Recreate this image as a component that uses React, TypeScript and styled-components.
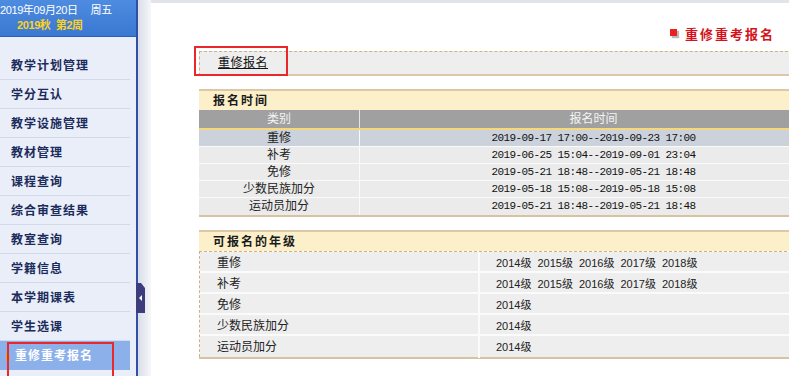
import { createGlobalStyle, styled } from "styled-components";

const GlobalStyle = createGlobalStyle`
  html, body {
    margin: 0;
    padding: 0;
    overflow: hidden;
    background: #fff;
    font-family: "Liberation Sans", "Noto Sans CJK SC", sans-serif;
  }
`;

const menu = [
  "教学计划管理",
  "学分互认",
  "教学设施管理",
  "教材管理",
  "课程查询",
  "综合审查结果",
  "教室查询",
  "学籍信息",
  "本学期课表",
  "学生选课",
  "重修重考报名",
];

const times = [
  { type: "重修", range: "2019-09-17 17:00--2019-09-23 17:00" },
  { type: "补考", range: "2019-06-25 15:04--2019-09-01 23:04" },
  { type: "免修", range: "2019-05-21 18:48--2019-05-21 18:48" },
  { type: "少数民族加分", range: "2019-05-18 15:08--2019-05-18 15:08" },
  { type: "运动员加分", range: "2019-05-21 18:48--2019-05-21 18:48" },
];

const all = ["2014级", "2015级", "2016级", "2017级", "2018级"];
const grades = [
  { type: "重修", list: all },
  { type: "补考", list: all },
  { type: "免修", list: ["2014级"] },
  { type: "少数民族加分", list: ["2014级"] },
  { type: "运动员加分", list: ["2014级"] },
];

function App() {
  return (
    <Page>
      <GlobalStyle />
      <Sidebar>
        <DateBox>
          <DateLine>
            2019年09月20日<Weekday>周五</Weekday>
          </DateLine>
          <TermLine>2019秋&nbsp;&nbsp;第2周</TermLine>
        </DateBox>
        <Menu>
          {menu.map((m, i) => {
            const active = i === menu.length - 1;
            return (
              <MenuItem key={m} $active={active}>
                {active && <Arrow />}
                {m}
                {active && <Mark $w={107} $h={36} $x={7} $y={1} />}
              </MenuItem>
            );
          })}
        </Menu>
        <Toggle width="10" height="30" viewBox="0 0 10 30">
          <path d="M0 0 L5 0 L9 5 L9 30 L0 30 Z" fill="#3d3d7e" />
          <path d="M6 12 L3 15 L6 18 Z" fill="#fff" />
        </Toggle>
      </Sidebar>
      <Gutter />
      <Main>
        <TitleRow>
          <Bullet />
          重修重考报名
        </TitleRow>
        <TabBar>
          <Tab>
            <TabLink>重修报名</TabLink>
            <Mark $w={94} $h={30} $x={-6} $y={-6} />
          </Tab>
        </TabBar>

        <Section $gap={13}>
          <SectionHead>报名时间</SectionHead>
          <HeadRow>
            <Cell $center>类别</Cell>
            <Cell $center>报名时间</Cell>
          </HeadRow>
          {times.map((t, i) => (
            <TimeRow key={t.type} $hl={i === 0}>
              <Cell $center>{t.type}</Cell>
              <TimeCell>{t.range}</TimeCell>
            </TimeRow>
          ))}
        </Section>

        <Section $gap={13}>
          <SectionHead>可报名的年级</SectionHead>
          <GradeBody>
            {grades.map((g) => (
              <GradeRow key={g.type}>
                <GradeLabel>{g.type}</GradeLabel>
                <GradeList>
                  {g.list.map((x) => (
                    <Grade key={x}>{x}</Grade>
                  ))}
                </GradeList>
              </GradeRow>
            ))}
          </GradeBody>
        </Section>
      </Main>
    </Page>
  );
}

export default App;

const Page = styled.div`
  display: flex;
  width: 789px;
  height: 376px;
  overflow: hidden;
`;

const Sidebar = styled.div`
  position: relative;
  width: 136px;
  flex-shrink: 0;
  background: #e9eef8;
  border-right: 2px solid #3350a8;
`;

const DateBox = styled.div`
  height: 37px;
  box-sizing: border-box;
  padding-top: 3px;
  background: linear-gradient(#4d8ce0, #3a78d2);
  border-bottom: 1px solid #2d5fb5;
  color: #fff;
  font-size: 11px;
  letter-spacing: -0.4px;
`;

const DateLine = styled.div`
  line-height: 14px;
  white-space: nowrap;
`;

const Weekday = styled.span`
  margin-left: 13px;
`;

const TermLine = styled.div`
  line-height: 16px;
  color: #ffd21a;
  font-weight: bold;
  padding-left: 17px;
`;

const Menu = styled.div`
  padding-top: 14px;
`;

const MenuItem = styled.div<{ $active?: boolean }>`
  position: relative;
  height: 28px;
  line-height: 31px;
  border-bottom: 1px solid ${(p) => (p.$active ? "transparent" : "#d2dae9")};
  margin-right: 6px;
  padding-left: ${(p) => (p.$active ? "15px" : "11px")};
  font-size: 12px;
  font-weight: bold;
  letter-spacing: 1px;
  color: ${(p) => (p.$active ? "#fff" : "#1b2b5b")};
  background: ${(p) => (p.$active ? "#8cb0ea" : "transparent")};
  white-space: nowrap;
`;

const Arrow = styled.span`
  position: absolute;
  left: 6px;
  top: 12px;
  width: 0;
  height: 0;
  border-left: 4px solid #f2a400;
  border-top: 4px solid transparent;
  border-bottom: 4px solid transparent;
`;

const Mark = styled.span<{ $w: number; $h: number; $x: number; $y: number }>`
  position: absolute;
  left: ${(p) => p.$x}px;
  top: ${(p) => p.$y}px;
  width: ${(p) => p.$w}px;
  height: ${(p) => p.$h}px;
  border: 2px solid #e8282a;
  box-sizing: border-box;
  pointer-events: none;
`;

const Toggle = styled.svg`
  position: absolute;
  right: -10px;
  top: 283px;
`;

const Gutter = styled.div`
  width: 13px;
  flex-shrink: 0;
  background: linear-gradient(to right, #d9dde7, #f6f7fa);
`;

const Main = styled.div`
  flex: 1;
  min-width: 0;
  overflow: hidden;
  border-top: 3px solid #e2e4ec;
  padding-left: 48px;
  font-size: 12px;
  color: #222;
`;

const TitleRow = styled.div`
  display: flex;
  align-items: center;
  justify-content: flex-end;
  padding-top: 22px;
  padding-right: 14px;
  height: 16px;
  margin-bottom: 10px;
  font-size: 13px;
  font-weight: bold;
  letter-spacing: 2px;
  color: #d4121a;
`;

const Bullet = styled.span`
  width: 7px;
  height: 7px;
  background: #e8231f;
  box-shadow: 2px 2px 1px #bbb;
  margin-right: 8px;
  margin-top: -2px;
`;

const TabBar = styled.div`
  width: 628px;
  height: 22px;
  background: #eeeeee;
  border-top: 1px dashed #d5ad85;
  border-left: 1px dashed #d5ad85;
  border-bottom: 2px solid #dcc8a8;
`;

const Tab = styled.div`
  position: relative;
  display: inline-block;
  height: 22px;
  padding-left: 18px;
  line-height: 23px;
`;

const TabLink = styled.span`
  text-decoration: underline;
  color: #111;
  letter-spacing: 0.5px;
`;

const Section = styled.div<{ $gap?: number }>`
  width: 628px;
  margin-top: ${(p) => p.$gap ?? 14}px;
  border-top: 2px solid #dcc7a6;
  border-bottom: 2px solid #d8c3a0;
`;

const SectionHead = styled.div`
  height: 19px;
  line-height: 20px;
  background: #fbf0c9;
  padding-left: 14px;
  font-weight: bold;
  letter-spacing: 2px;
  color: #1a1a1a;
`;

const HeadRow = styled.div`
  display: grid;
  grid-template-columns: 160px 1fr;
  height: 18px;
  line-height: 18px;
  background: #a0a0a0;
  color: #f4f4f4;
  border-bottom: 2px solid #f6d77a;
  & > div + div {
    border-left: 1px solid #e4e4e4;
  }
`;

const Cell = styled.div<{ $center?: boolean }>`
  text-align: ${(p) => (p.$center ? "center" : "left")};
  white-space: nowrap;
`;

const TimeRow = styled.div<{ $hl?: boolean }>`
  display: grid;
  grid-template-columns: 160px 1fr;
  height: 16px;
  line-height: 17px;
  background: ${(p) => (p.$hl ? "#ccd2dc" : "#ebebeb")};
  border-bottom: 1px solid #fafafa;
  &:last-child {
    border-bottom: none;
    height: 17px;
  }
  & > div + div {
    border-left: 1px solid #fafafa;
  }
`;

const TimeCell = styled.div`
  text-align: center;
  font-family: "Liberation Mono", monospace;
  font-size: 11px;
  letter-spacing: -0.6px;
  color: #111;
  white-space: nowrap;
`;

const GradeBody = styled.div`
  border-top: 1px dashed #d5ad85;
  border-left: 1px dashed #d5ad85;
`;

const GradeRow = styled.div`
  display: grid;
  grid-template-columns: 280px 1fr;
  height: 19px;
  line-height: 22px;
  background: #eeeeee;
  border-bottom: 2px solid #fbfbfb;
  &:last-child {
    border-bottom: none;
    height: 21px;
  }
`;

const GradeLabel = styled.div`
  padding-left: 17px;
  border-right: 2px solid #fbfbfb;
`;

const GradeList = styled.div`
  padding-left: 16px;
  white-space: nowrap;
  font-size: 11px;
`;

const Grade = styled.span`
  margin-right: 6px;
`;
